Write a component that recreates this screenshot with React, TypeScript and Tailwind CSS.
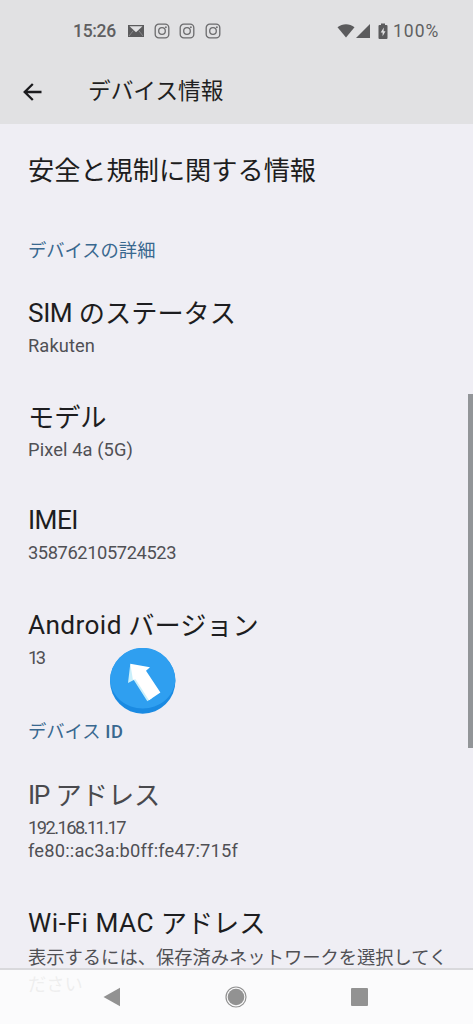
const ITEMS = {
  details: [
    { title: ["SIM", "のステータス"], summary: ["Rakuten"], space: "mt-[33px]", titleTracking: "tracking-[-0.4px]", tracking: ["tracking-[0.1px]"] },
    { title: ["", "モデル"], summary: ["Pixel 4a (5G)"], space: "mt-[43px]", titleTracking: "", tracking: ["tracking-[0.1px]"] },
    { title: ["IMEI", ""], summary: ["358762105724523"], space: "mt-[42px]", titleTracking: "tracking-[-0.5px]", tracking: ["tracking-[-0.4px]"] },
    { title: ["Android", "バージョン"], summary: ["13"], space: "mt-[44px]", titleTracking: "tracking-[0.4px]", tracking: ["tracking-[-2.5px]"], badge: true },
  ],
  ids: [
    { title: ["IP", "アドレス"], summary: ["192.168.11.17", "fe80::ac3a:b0ff:fe47:715f"], space: "mt-[34px]", titleTracking: "tracking-[-1.3px]", tracking: ["tracking-[-1.55px]", "tracking-[0.2px]"], muted: true },
    { title: ["Wi-Fi MAC", "アドレス"], summary: ["表示するには、保存済みネットワークを選択してく", "ださい"], space: "mt-[44px]", titleTracking: "tracking-[0.55px]", tracking: ["", ""], tall: true },
  ],
};

const InstagramIcon = () => (
  <svg viewBox="0 0 16 16" className="h-4 w-4" fill="none" stroke="#6b6b6d" strokeWidth="1.3">
    <rect x="1.2" y="1.2" width="13.6" height="13.6" rx="3.6" />
    <circle cx="8" cy="8" r="3.3" />
    <circle cx="11.9" cy="4.2" r="0.9" fill="#6b6b6d" stroke="none" />
  </svg>
);

const StatusBar = () => (
  <div className="flex h-[61px] items-center pl-[73px] pr-[33px] text-[17.5px] font-medium text-[#5f5f61]">
    <span className="mt-px w-[43px] whitespace-nowrap tracking-[-0.3px]">15:26</span>
    <svg viewBox="0 0 16 12" className="ml-3 mt-px h-3 w-4">
      <path d="M0 0h16v12H0z" fill="#5b5b5d" />
      <path d="M1 11l4.2-5.3M15 11l-4.2-5.3" fill="none" stroke="#a5a5a7" strokeWidth="0.6" />
      <path d="M1.5 1.3h13L8 7.3z" fill="#e1e1e3" />
    </svg>
    <div className="ml-[9.5px] flex gap-[9.5px]">
      <InstagramIcon />
      <InstagramIcon />
      <InstagramIcon />
    </div>
    <svg viewBox="0 0 18 15" className="ml-auto h-[15px] w-[18px]" fill="#5b5b5d">
      <path d="M.5 4.3C5.5.1 12.5.1 17.5 4.3L9 14.5z" />
    </svg>
    <svg viewBox="0 0 14 14" className="ml-[1px] h-[14px] w-[14px]" fill="#5b5b5d">
      <path d="M14 0v14H0z" />
    </svg>
    <svg viewBox="0 0 10 16" className="ml-[8px] h-4 w-[10px]">
      <path d="M3 .5h4v1.500h1.500q1 0 1 1V15q0 1-1 1h-7q-1 0-1-1V3q0-1 1-1H3z" fill="#5b5b5d" />
      <path d="M5.8 4.5 2.7 9.5h1.900v3.800l2.900-5H5.600z" fill="#e1e1e3" />
    </svg>
    <span className="ml-[5px] mt-px w-[47px] whitespace-nowrap font-normal tracking-[1px]">100%</span>
  </div>
);

const Header = () => (
  <header className="h-[124px] bg-[#e1e1e3]">
    <StatusBar />
    <div className="flex h-[61px] items-center pl-[23px]">
      <svg viewBox="0 0 19 18" className="h-[18px] w-[19px]" fill="none" stroke="#1b1b1e" strokeWidth="2.3">
        <path d="M18.5 9H2M9.8 1 1.7 9l8.1 8" />
      </svg>
      <h1 className="mt-px ml-[46px] text-[22.7px] leading-[34px] text-[#1f1f22]">デバイス情報</h1>
    </div>
  </header>
);

const ArrowBadge = () => (
  <svg viewBox="110 648 66 66" className="absolute left-[110px] top-[40px] h-[66px] w-[66px]">
    <circle cx="142.7" cy="681" r="32.7" fill="#1a8ae2" />
    <path d="M110 680.5a32.7 32.7 0 0 1 65.4 0C174 697 159 708.5 142.7 708.5S111.400 697 110 680.5z" fill="#2f9ff0" />
    <path d="M130.3 663.7 128 683l5.800-3 13.500 21.300 4.500-3z" fill="#c9effb" />
    <path d="M130.3 663.7 150 667.3l-4 3.500 14.400 21.700-11.400 7.800-13.500-21-2.600 0.500z" fill="#fff" />
  </svg>
);

const Category = ({ children, className }: any) => (
  <h2 className={`px-7 text-[18.3px] leading-6 font-normal text-[#39688f] ${className}`}>{children}</h2>
);

const Item = ({ item }: any) => (
  <div className={`relative whitespace-nowrap px-7 ${item.space}`}>
    <h3 className={`text-[26.2px] leading-[34px] ${item.muted ? "text-[#49494d]" : "text-[#1d1d20]"}`}>
      <span className={item.titleTracking}>{item.title[0]}</span>
      {item.title[0] && item.title[1] && " "}
      <span className="relative top-px">{item.title[1]}</span>
    </h3>
    <div className={`mt-1 text-[18.3px] text-[#505054] ${item.tall ? "leading-[27px]" : "leading-[23px]"}`}>
      {item.summary.map((line: string, i: number) => (
        <p key={line} className={item.tracking[i]}>
          {line}
        </p>
      ))}
    </div>
    {item.badge && <ArrowBadge />}
  </div>
);

const NavBar = () => (
  <nav className="absolute inset-x-0 bottom-0 flex h-[56px] items-center border-t-2 border-[#d9d9dc] bg-[#fcfcfc]/92">
    <svg viewBox="0 0 17 20" className="ml-[103px] h-5 w-[17px]" fill="#929292">
      <path d="M17 .8v18.400L.5 10z" />
    </svg>
    <svg viewBox="0 0 22 22" className="ml-[105px] h-[22px] w-[22px]">
      <circle cx="11" cy="11" r="10" fill="none" stroke="#929292" strokeWidth="1.2" />
      <circle cx="11" cy="11" r="8.3" fill="#929292" />
    </svg>
    <div className="ml-[104px] h-[18px] w-[17px] rounded-[1px] bg-[#929292]" />
  </nav>
);

const App = () => {
  return (
    <div className="relative h-[1024px] w-[473px] overflow-hidden bg-[#efeef4] font-['Roboto','Noto_Sans_CJK_JP',sans-serif]">
      <Header />
      <main>
        <h3 className="mt-[30px] whitespace-nowrap px-7 text-[26.2px] leading-[34px] text-[#1d1d20]">
          安全と規制に関する情報
        </h3>
        <Category className="mt-[51px]">デバイスの詳細</Category>
        {ITEMS.details.map((item) => (
          <Item key={item.summary[0]} item={item} />
        ))}
        <Category className="mt-[51px]">
          デバイス <span className="font-medium tracking-[0.8px]">ID</span>
        </Category>
        {ITEMS.ids.map((item) => (
          <Item key={item.summary[0]} item={item} />
        ))}
      </main>
      <div className="absolute right-0 top-[394px] h-[354px] w-[5px] bg-[#929598]" />
      <NavBar />
    </div>
  );
};

export default App;
